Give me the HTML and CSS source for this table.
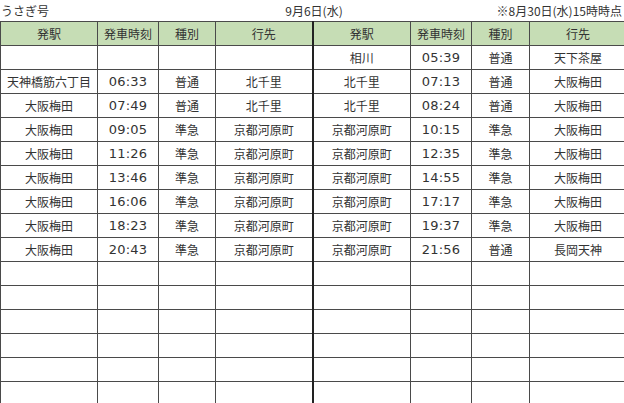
FILE: index.html
```html
<!DOCTYPE html>
<html lang="ja">
<head>
<meta charset="utf-8">
<link rel="stylesheet" href="styles.css">
</head>
<body>
<div class="titlebar">
  <span class="t-left">うさぎ号</span>
  <span class="t-center">9月6日(水)</span>
  <span class="t-right">※8月30日(水)15時時点</span>
</div>
<table class="tt">
  <colgroup>
    <col class="c-st"><col class="c-tm"><col class="c-kd"><col class="c-ds">
    <col class="c-st2"><col class="c-tm"><col class="c-kd2"><col class="c-ds">
  </colgroup>
  <thead>
    <tr>
      <th>発駅</th><th>発車時刻</th><th>種別</th><th class="mid">行先</th>
      <th>発駅</th><th>発車時刻</th><th>種別</th><th>行先</th>
    </tr>
  </thead>
  <tbody>
    <tr><td></td><td class="num"></td><td></td><td class="mid"></td><td>相川</td><td class="num">05:39</td><td>普通</td><td>天下茶屋</td></tr>
    <tr><td>天神橋筋六丁目</td><td class="num">06:33</td><td>普通</td><td class="mid">北千里</td><td>北千里</td><td class="num">07:13</td><td>普通</td><td>大阪梅田</td></tr>
    <tr><td>大阪梅田</td><td class="num">07:49</td><td>普通</td><td class="mid">北千里</td><td>北千里</td><td class="num">08:24</td><td>普通</td><td>大阪梅田</td></tr>
    <tr><td>大阪梅田</td><td class="num">09:05</td><td>準急</td><td class="mid">京都河原町</td><td>京都河原町</td><td class="num">10:15</td><td>準急</td><td>大阪梅田</td></tr>
    <tr><td>大阪梅田</td><td class="num">11:26</td><td>準急</td><td class="mid">京都河原町</td><td>京都河原町</td><td class="num">12:35</td><td>準急</td><td>大阪梅田</td></tr>
    <tr><td>大阪梅田</td><td class="num">13:46</td><td>準急</td><td class="mid">京都河原町</td><td>京都河原町</td><td class="num">14:55</td><td>準急</td><td>大阪梅田</td></tr>
    <tr><td>大阪梅田</td><td class="num">16:06</td><td>準急</td><td class="mid">京都河原町</td><td>京都河原町</td><td class="num">17:17</td><td>準急</td><td>大阪梅田</td></tr>
    <tr><td>大阪梅田</td><td class="num">18:23</td><td>準急</td><td class="mid">京都河原町</td><td>京都河原町</td><td class="num">19:37</td><td>準急</td><td>大阪梅田</td></tr>
    <tr><td>大阪梅田</td><td class="num">20:43</td><td>準急</td><td class="mid">京都河原町</td><td>京都河原町</td><td class="num">21:56</td><td>普通</td><td>長岡天神</td></tr>
    <tr><td></td><td></td><td></td><td class="mid"></td><td></td><td></td><td></td><td></td></tr>
    <tr><td></td><td></td><td></td><td class="mid"></td><td></td><td></td><td></td><td></td></tr>
    <tr><td></td><td></td><td></td><td class="mid"></td><td></td><td></td><td></td><td></td></tr>
    <tr><td></td><td></td><td></td><td class="mid"></td><td></td><td></td><td></td><td></td></tr>
    <tr><td></td><td></td><td></td><td class="mid"></td><td></td><td></td><td></td><td></td></tr>
    <tr><td></td><td></td><td></td><td class="mid"></td><td></td><td></td><td></td><td></td></tr>
  </tbody>
</table>
</body>
</html>
```
FILE: styles.css
```css
html, body {
  margin: 0;
  padding: 0;
  background: #ffffff;
  overflow: hidden;
}
body {
  width: 624px;
  height: 403px;
  font-family: "Noto Sans CJK JP", "Noto Sans", sans-serif;
  color: #333333;
  font-size: 12px;
}
.titlebar {
  height: 21px;
  display: grid;
  grid-template-columns: 1fr auto 1fr;
  align-items: center;
  line-height: 21px;
  font-size: 12px;
}
.t-left { padding-left: 1px; }
.t-center { padding-left: 4px; }
.t-right { text-align: right; padding-right: 2px; }
.tt {
  border-collapse: collapse;
  table-layout: fixed;
  width: 627px;
}
.c-st { width: 97px; }
.c-tm { width: 61px; }
.c-kd { width: 57px; }
.c-kd2 { width: 58px; }
.c-ds { width: 97px; }
.c-st2 { width: 98px; }
.tt th, .tt td {
  border: 1px solid #4a4a4a;
  height: 23px;
  padding: 0;
  text-align: center;
  vertical-align: middle;
  font-weight: normal;
  white-space: nowrap;
  overflow: hidden;
  line-height: 16px;
}
.tt th {
  background: #c6ddb5;
}
.tt .mid {
  border-right: 2px solid #222222;
}
.tt .num {
  font-family: "DejaVu Sans", sans-serif;
  font-size: 13px;
  letter-spacing: 0.2px;
}
```
